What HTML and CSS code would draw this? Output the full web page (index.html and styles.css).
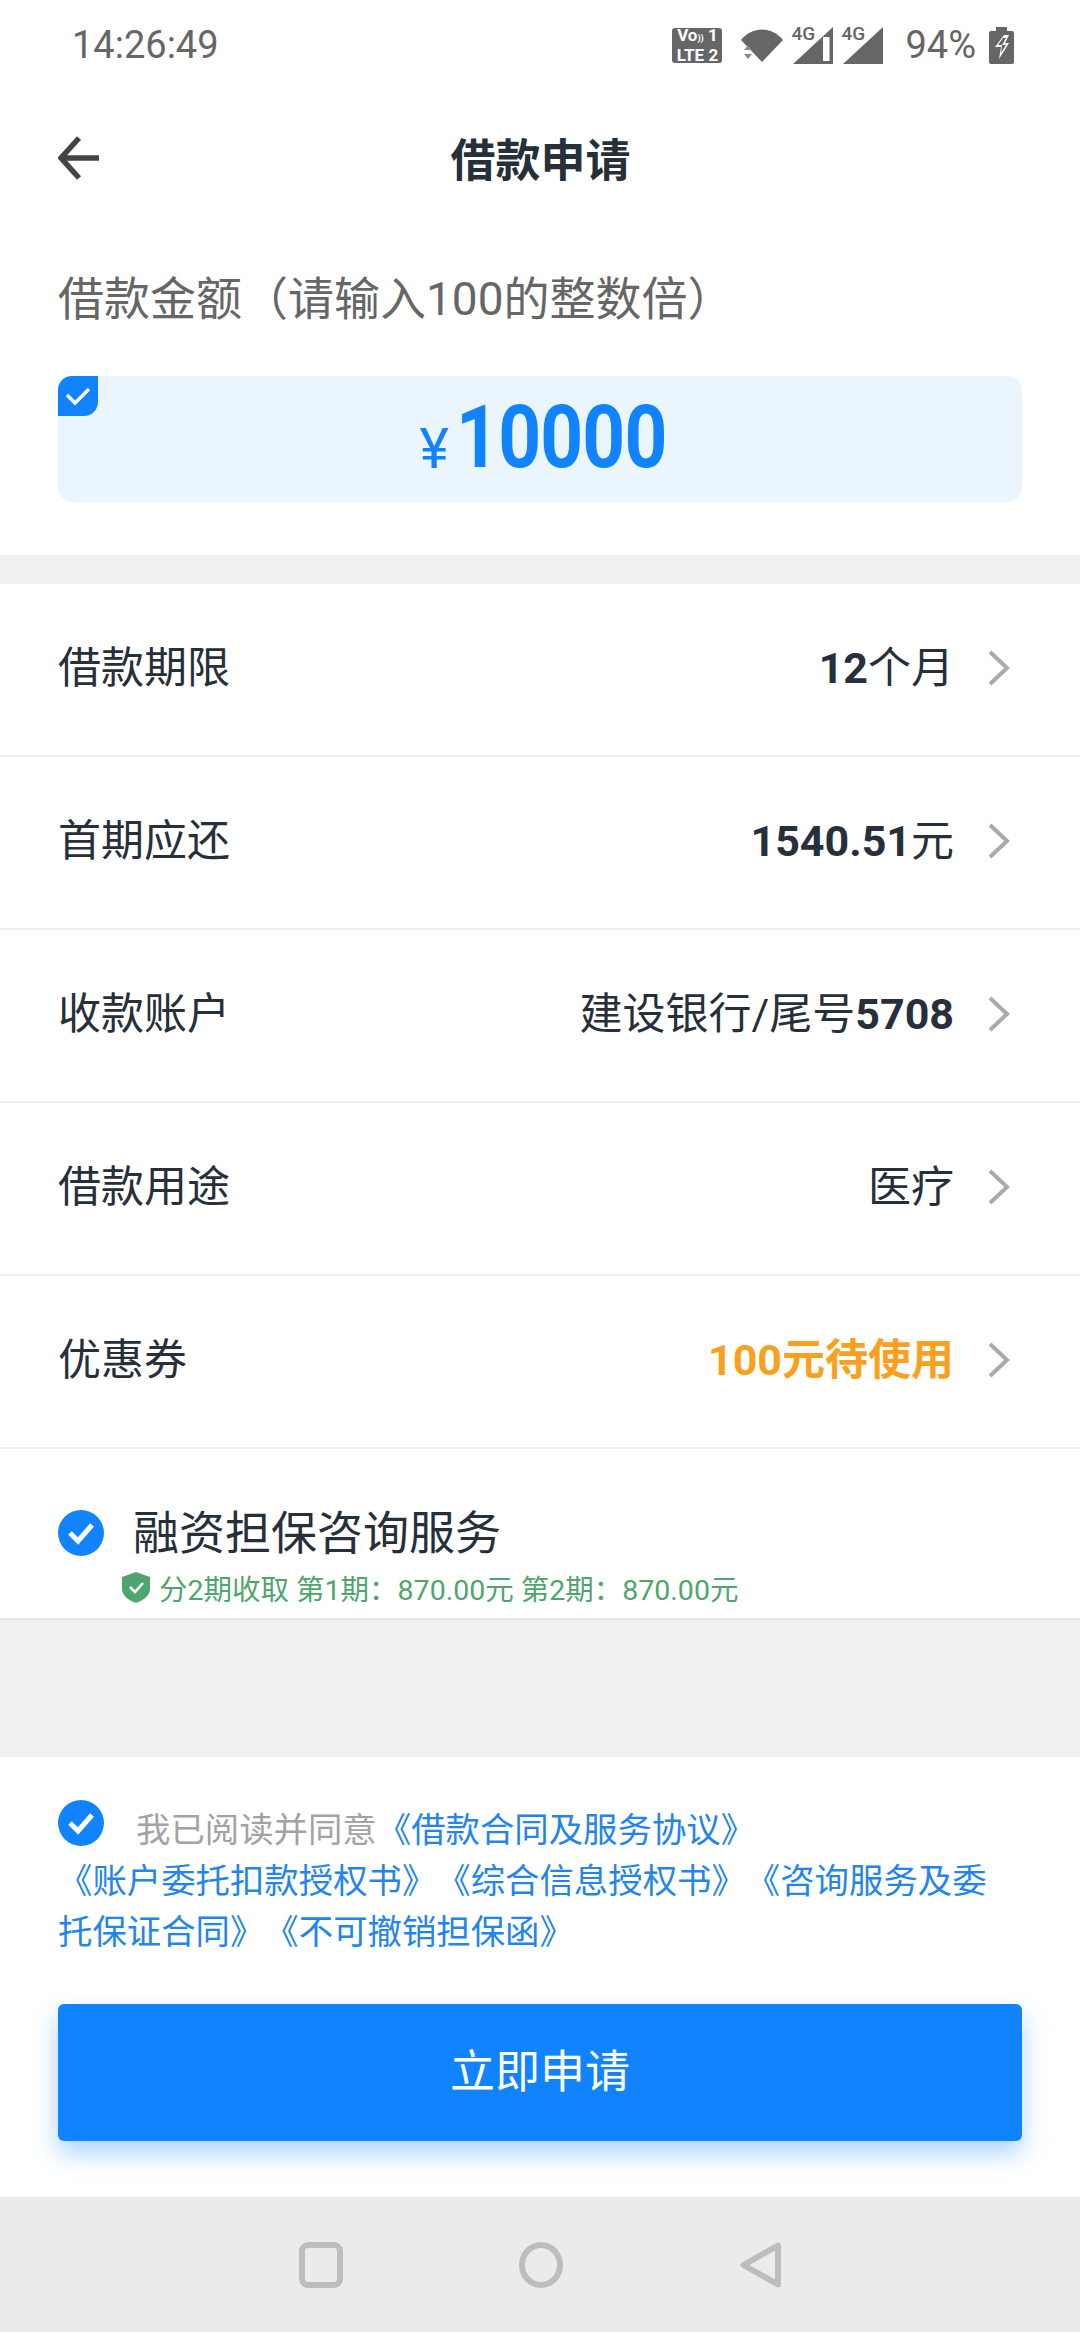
FILE: index.html
```html
<!DOCTYPE html>
<html lang="zh-CN">
<head>
  <meta charset="UTF-8">
  <title>借款申请</title>
  <meta name="viewport" content="width=device-width, initial-scale=1.0">
  <link rel="stylesheet" href="styles.css">
</head>
<body>
  <div class="status">
    <span class="time">14:26:49</span>
    <div class="status-icons">
      <div class="volte"><span>Vo<i>))</i> 1</span><span>LTE 2</span></div>
      <svg class="wifi" width="42" height="33" viewBox="0 0 42 33">
        <path d="M0 11 C11 -3 31 -3 42 11 L21 33 Z" fill="#666"/>
        <path d="M3 21 L7 16 L11 21 Z M3 25 L11 25 L7 30 Z" fill="#888"/>
      </svg>
      <div class="signal">
        <span>4G</span>
        <svg width="40" height="37" viewBox="0 0 40 37">
          <path d="M0 37 L40 0 V37 Z" fill="#666"/>
          <path d="M30 10 H36.5 V34 H30 Z" fill="#fff"/>
        </svg>
      </div>
      <div class="signal">
        <span>4G</span>
        <svg width="40" height="37" viewBox="0 0 40 37">
          <path d="M0 37 L40 0 V37 Z" fill="#666"/>
        </svg>
      </div>
      <span class="battery-text">94%</span>
      <svg class="battery" width="25" height="37" viewBox="0 0 25 37">
        <path d="M7 0 H18 V4 H23 Q25 4 25 6 V35 Q25 37 23 37 H2 Q0 37 0 35 V6 Q0 4 2 4 H7 Z" fill="#666"/>
        <path d="M15 8 H20 L16 16 H20 L10 32 L12 20 H6 Z" fill="#fff"/>
        <path d="M14 11 H17 L13 18 H17 L12 26 L13 18 H9 Z" fill="#666"/>
      </svg>
    </div>
  </div>

  <header class="topbar">
    <svg class="back" width="42" height="44" viewBox="0 0 42 44">
      <path d="M21 2 L3 22 L21 42 M3 22 H41" fill="none" stroke="#444" stroke-width="5.5"/>
    </svg>
    <h1>借款申请</h1>
    <span></span>
  </header>

  <section class="amount">
    <div class="amount-label">借款金额（请输入100的整数倍）</div>
    <div class="amount-box">
      <div class="badge">
        <svg width="26" height="20" viewBox="0 0 26 20">
          <path d="M2 9 L10 17 L24 3" fill="none" stroke="#fff" stroke-width="3.4"/>
        </svg>
      </div>
      <span class="yen">¥</span><span class="money">10000</span>
    </div>
  </section>

  <div class="band"></div>

  <div class="row">
    <span>借款期限</span>
    <div class="row-value"><b>12</b>个月<svg class="chev" width="22" height="36" viewBox="0 0 22 36"><path d="M2 2 L19 18 L2 34" fill="none" stroke="#aaa" stroke-width="4"/></svg></div>
  </div>
  <div class="row">
    <span>首期应还</span>
    <div class="row-value"><b>1540.51</b>元<svg class="chev" width="22" height="36" viewBox="0 0 22 36"><path d="M2 2 L19 18 L2 34" fill="none" stroke="#aaa" stroke-width="4"/></svg></div>
  </div>
  <div class="row">
    <span>收款账户</span>
    <div class="row-value">建设银行/尾号<b>5708</b><svg class="chev" width="22" height="36" viewBox="0 0 22 36"><path d="M2 2 L19 18 L2 34" fill="none" stroke="#aaa" stroke-width="4"/></svg></div>
  </div>
  <div class="row">
    <span>借款用途</span>
    <div class="row-value">医疗<svg class="chev" width="22" height="36" viewBox="0 0 22 36"><path d="M2 2 L19 18 L2 34" fill="none" stroke="#aaa" stroke-width="4"/></svg></div>
  </div>
  <div class="row">
    <span>优惠券</span>
    <div class="row-value orange">100元待使用<svg class="chev" width="22" height="36" viewBox="0 0 22 36"><path d="M2 2 L19 18 L2 34" fill="none" stroke="#aaa" stroke-width="4"/></svg></div>
  </div>

  <section class="service">
    <div class="service-title">
      <svg width="46" height="46" viewBox="0 0 46 46">
        <circle cx="23" cy="23" r="23" fill="#1283ff"/>
        <path d="M12 23 L20 31 L34 15" fill="none" stroke="#fff" stroke-width="5"/>
      </svg>
      <span class="service-name">融资担保咨询服务</span>
    </div>
    <div class="service-sub">
      <svg width="28" height="31" viewBox="0 0 28 31">
        <path d="M14 0 L28 5 V17 C28 24 20 29 14 31 C8 29 0 24 0 17 V5 Z" fill="#4fa56f"/>
        <path d="M8 15 L13 20 L21 11" fill="none" stroke="#fff" stroke-width="2.6"/>
      </svg>
      <span>分2期收取 第1期：870.00元 第2期：870.00元</span>
    </div>
  </section>

  <div class="gap"></div>

  <section class="bottom">
    <p class="agree">
      <svg class="agree-check" width="46" height="46" viewBox="0 0 46 46">
        <circle cx="23" cy="23" r="23" fill="#1283ff"/>
        <path d="M12 23 L20 31 L34 15" fill="none" stroke="#fff" stroke-width="5"/>
      </svg><span class="muted">我已阅读并同意</span>《借款合同及服务协议》<br>《账户委托扣款授权书》《综合信息授权书》《咨询服务及委<br>托保证合同》《不可撤销担保函》
    </p>
    <button class="apply">立即申请</button>
  </section>

  <nav class="navbar">
    <svg width="44" height="46" viewBox="0 0 44 46"><rect x="3" y="3" width="38" height="40" rx="6" fill="none" stroke="#bdbdbd" stroke-width="6"/></svg>
    <svg width="44" height="46" viewBox="0 0 44 46"><ellipse cx="22" cy="23" rx="19" ry="20" fill="none" stroke="#bdbdbd" stroke-width="6"/></svg>
    <svg width="42" height="46" viewBox="0 0 42 46"><path d="M38 3.5 V42.5 L3.5 23 Z" fill="none" stroke="#bdbdbd" stroke-width="6" stroke-linejoin="round"/></svg>
  </nav>
</body>
</html>
```

FILE: styles.css
```css
* {
  box-sizing: border-box;
}
body {
  margin: 0;
  width: 1080px;
  height: 2332px;
  overflow: hidden;
  background: #fff;
  color: #262f3a;
  font-family: Roboto, "Noto Sans CJK SC", sans-serif;
  text-spacing-trim: space-all;
}
.status {
  height: 90px;
  padding: 0 66px 0 72px;
  display: flex;
  align-items: center;
  justify-content: space-between;
  color: #666;
}
.time {
  font-size: 38px;
}
.status-icons {
  display: flex;
  align-items: center;
}
.volte {
  width: 50px;
  height: 35px;
  background: #666;
  border-radius: 3px;
  color: #fff;
  font-size: 17px;
  line-height: 17px;
  font-weight: 700;
  display: flex;
  flex-direction: column;
  justify-content: center;
  align-items: center;
  white-space: nowrap;
}
.volte i {
  font-style: normal;
  font-size: 9px;
}
.wifi {
  margin-left: 19px;
}
.signal {
  position: relative;
  margin-left: 10px;
  height: 37px;
}
.signal svg {
  display: block;
}
.signal span {
  position: absolute;
  left: -2px;
  top: -3px;
  font-size: 19px;
  line-height: 20px;
  font-weight: 500;
  color: #666;
}
.battery-text {
  margin-left: 22px;
  font-size: 38px;
}
.battery {
  margin-left: 13px;
}
.topbar {
  height: 136px;
  display: grid;
  grid-template-columns: 1fr auto 1fr;
  align-items: center;
  padding: 0 57px 0 58px;
}
.topbar h1 {
  margin: 0 0 2px;
  font-size: 45px;
  font-weight: 700;
}
.amount {
  padding: 0 58px 53px;
}
.amount-label {
  height: 150px;
  padding-top: 42px;
  font-size: 46px;
  line-height: 62px;
  color: #666;
}
.amount-box {
  position: relative;
  height: 126px;
  background: #ebf5fe;
  border-radius: 14px;
  display: flex;
  align-items: center;
  justify-content: center;
  padding: 0 0 4px 6px;
  color: #1283ff;
}
.badge {
  position: absolute;
  left: 0;
  top: 0;
  width: 40px;
  height: 40px;
  background: #1283ff;
  border-radius: 14px 0 14px 0;
  display: flex;
  align-items: center;
  justify-content: center;
}
.yen {
  font-size: 56px;
  font-weight: 400;
  margin-top: 24px;
}
.money {
  display: inline-block;
  font-size: 87px;
  font-weight: 700;
  line-height: 100px;
  letter-spacing: -1px;
  margin: 0 -17px 0 -10px;
  transform: scaleX(0.86);
}
.band {
  height: 29px;
  background: #f0f0f0;
}
.row {
  height: 173px;
  padding: 0 70px 12px 58px;
  border-bottom: 2px solid #eee;
  display: flex;
  align-items: center;
  justify-content: space-between;
  font-size: 43px;
}
.row-value {
  display: flex;
  align-items: baseline;
}
.row-value b {
  font-weight: 700;
}
.orange {
  color: #f9a11f;
  font-weight: 700;
}
.chev {
  align-self: center;
  margin: 8px 0 0 34px;
}
.service {
  height: 171px;
  padding: 61px 58px 0;
  border-bottom: 2px solid #e6e6e6;
}
.service-title {
  height: 46px;
  display: flex;
  align-items: center;
  gap: 29px;
  font-size: 46px;
}
.service-name {
  margin-bottom: 8px;
}
.service-sub {
  margin: 16px 0 0 64px;
  height: 31px;
  display: flex;
  align-items: center;
  gap: 9px;
  font-size: 28.5px;
  color: #4fa56f;
  white-space: nowrap;
}
.gap {
  height: 137px;
  background: #f0f0f0;
}
.bottom {
  height: 440px;
  padding: 43px 58px 0;
}
.agree {
  margin: 0;
  height: 204px;
  font-size: 34.4px;
  line-height: 51px;
  color: #2385ec;
  white-space: nowrap;
}
.agree-check {
  vertical-align: -4px;
  margin-right: 32px;
}
.muted {
  color: #a3a3a3;
}
.apply {
  display: block;
  width: 100%;
  height: 137px;
  border: 0;
  border-radius: 6px;
  padding: 0 0 8px;
  background: #1283ff;
  color: #fff;
  font-family: inherit;
  font-size: 45px;
  box-shadow: 0 12px 24px rgba(18, 131, 255, 0.35);
}
.navbar {
  height: 135px;
  background: #ebebeb;
  display: flex;
  align-items: center;
  justify-content: center;
  gap: 176.5px;
}
```
